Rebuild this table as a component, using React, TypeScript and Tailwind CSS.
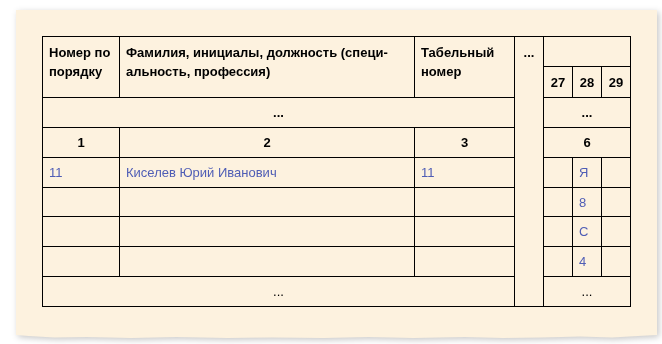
import React from "react";

const paper = "bg-[#fdf2df]";
const base = `${paper} text-[13px] leading-[19px]`;
const cell = `${base} text-black`;
const head = `${cell} font-bold px-[6px] pt-[6px]`;
const num = `${cell} font-bold flex items-center justify-center`;
const data = `${base} text-[#4f5db5] flex items-center px-[6px]`;

// torn lower edge of the sheet
const tornEdge =
  "[clip-path:polygon(0_0,100%_0,100%_325px,97%_326px,93%_327.5px,88%_326.5px,82%_327.5px,76%_328px,70%_327px,62%_328px,55%_327px,48%_328px,40%_327.5px,33%_328px,25%_327px,18%_328px,11%_327px,6%_327.5px,2%_326px,0_325px)]";

const App: React.FC = () => {
  const rows = [
    { no: "", name: "", tab: "", day: "8" },
    { no: "", name: "", tab: "", day: "С" },
    { no: "", name: "", tab: "", day: "4" },
  ];

  return (
    <div
      className="w-[662px] h-[344px] bg-white pt-[10px] pl-[16px]"
      style={{ fontFamily: '"Liberation Sans", Arial, sans-serif' }}
    >
      <div className="w-[641px] [filter:drop-shadow(2px_2px_3px_rgba(0,0,0,0.22))]">
        <div className={`${paper} ${tornEdge} w-[641px] h-[328px] pt-[26px] pl-[26px]`}>
          <div className="grid w-fit grid-cols-[76px_294px_99px_28px_28px_28px_28px] grid-rows-[29px_30px_29px_29px_29px_28px_29px_29px_29px] gap-px bg-black border border-black">
            {/* header */}
            <div className={`${head} row-span-2`}>
              Номер по
              <br />
              порядку
            </div>
            <div className={`${head} row-span-2`}>
              Фамилия, инициалы, должность (специ-
              <br />
              альность, профессия)
            </div>
            <div className={`${head} row-span-2`}>
              Табельный
              <br />
              номер
            </div>
            <div className={`${head} row-span-9 px-0 text-center`}>...</div>
            <div className={`${cell} col-span-3`} />
            <div className={num}>27</div>
            <div className={num}>28</div>
            <div className={num}>29</div>

            <div className={`${num} col-span-3`}>...</div>
            <div className={`${num} col-span-3`}>...</div>

            <div className={num}>1</div>
            <div className={num}>2</div>
            <div className={num}>3</div>
            <div className={`${num} col-span-3`}>6</div>

            <div className={data}>11</div>
            <div className={data}>Киселев Юрий Иванович</div>
            <div className={data}>11</div>
            <div className={cell} />
            <div className={data}>Я</div>
            <div className={cell} />

            {rows.map((r, i) => (
              <React.Fragment key={i}>
                <div className={data}>{r.no}</div>
                <div className={data}>{r.name}</div>
                <div className={data}>{r.tab}</div>
                <div className={cell} />
                <div className={data}>{r.day}</div>
                <div className={cell} />
              </React.Fragment>
            ))}

            <div className={`${cell} col-span-3 flex items-center justify-center`}>...</div>
            <div className={`${cell} col-span-3 flex items-center justify-center`}>...</div>
          </div>
        </div>
      </div>
    </div>
  );
};

export default App;
